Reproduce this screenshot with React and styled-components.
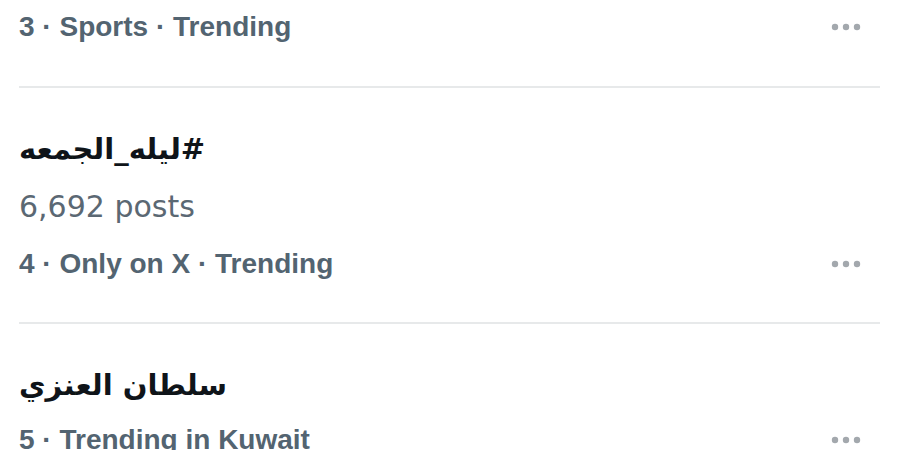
import styled, { createGlobalStyle } from "styled-components";

const GlobalStyle = createGlobalStyle`
  html, body {
    margin: 0;
    padding: 0;
    background: #ffffff;
  }
  body {
    width: 900px;
    height: 450px;
    overflow: hidden;
  }
`;

const trends = [
  { rank: 3, meta: "Sports · Trending", cut: true },
  { rank: 4, title: "#ليله_الجمعه", posts: "6,692 posts", meta: "Only on X · Trending" },
  { rank: 5, title: "سلطان العنزي", meta: "Trending in Kuwait" },
];

function App() {
  return (
    <>
      <GlobalStyle />
      <List>
        {trends.map((t) => (
          <Trend key={t.rank} $cut={t.cut}>
            {t.title && <Title dir="rtl">{t.title}</Title>}
            {t.posts && <Posts>{t.posts}</Posts>}
            <MetaRow>
              <Meta>
                {t.rank} · {t.meta}
              </Meta>
              <MoreButton aria-label="More">
                <svg width="30" height="8" viewBox="0 0 30 8">
                  <circle cx="4" cy="4" r="3.2" />
                  <circle cx="15" cy="4" r="3.2" />
                  <circle cx="26" cy="4" r="3.2" />
                </svg>
              </MoreButton>
            </MetaRow>
          </Trend>
        ))}
      </List>
    </>
  );
}

const List = styled.div`
  display: flex;
  flex-direction: column;
  padding: 0 20px 0 19px;
`;

const Trend = styled.div`
  display: flex;
  flex-direction: column;
  padding: ${({ $cut }) => ($cut ? "0 0 32px" : "33px 0 31px")};
  border-bottom: 2px solid #e7e9ea;
  &:last-child {
    border-bottom: none;
  }
`;

const Title = styled.div`
  font-family: "DejaVu Sans", "Noto Sans", sans-serif;
  font-weight: 700;
  font-size: 29px;
  line-height: 56px;
  height: 56px;
  color: #0f1419;
  text-align: left;
`;

const Posts = styled.div`
  font-family: "DejaVu Sans", sans-serif;
  font-size: 30px;
  line-height: 60px;
  color: #5b6873;
`;

const MetaRow = styled.div`
  display: flex;
  align-items: center;
  justify-content: space-between;
  height: 54px;
`;

const Meta = styled.span`
  font-family: "Liberation Sans", Arial, sans-serif;
  font-weight: 700;
  font-size: 28px;
  line-height: 54px;
  color: #536471;
`;

const MoreButton = styled.button`
  display: flex;
  align-items: center;
  justify-content: center;
  width: 46px;
  height: 40px;
  margin-right: 11px;
  padding: 0;
  border: none;
  background: transparent;
  fill: #a3a8ad;
`;

export default App;
